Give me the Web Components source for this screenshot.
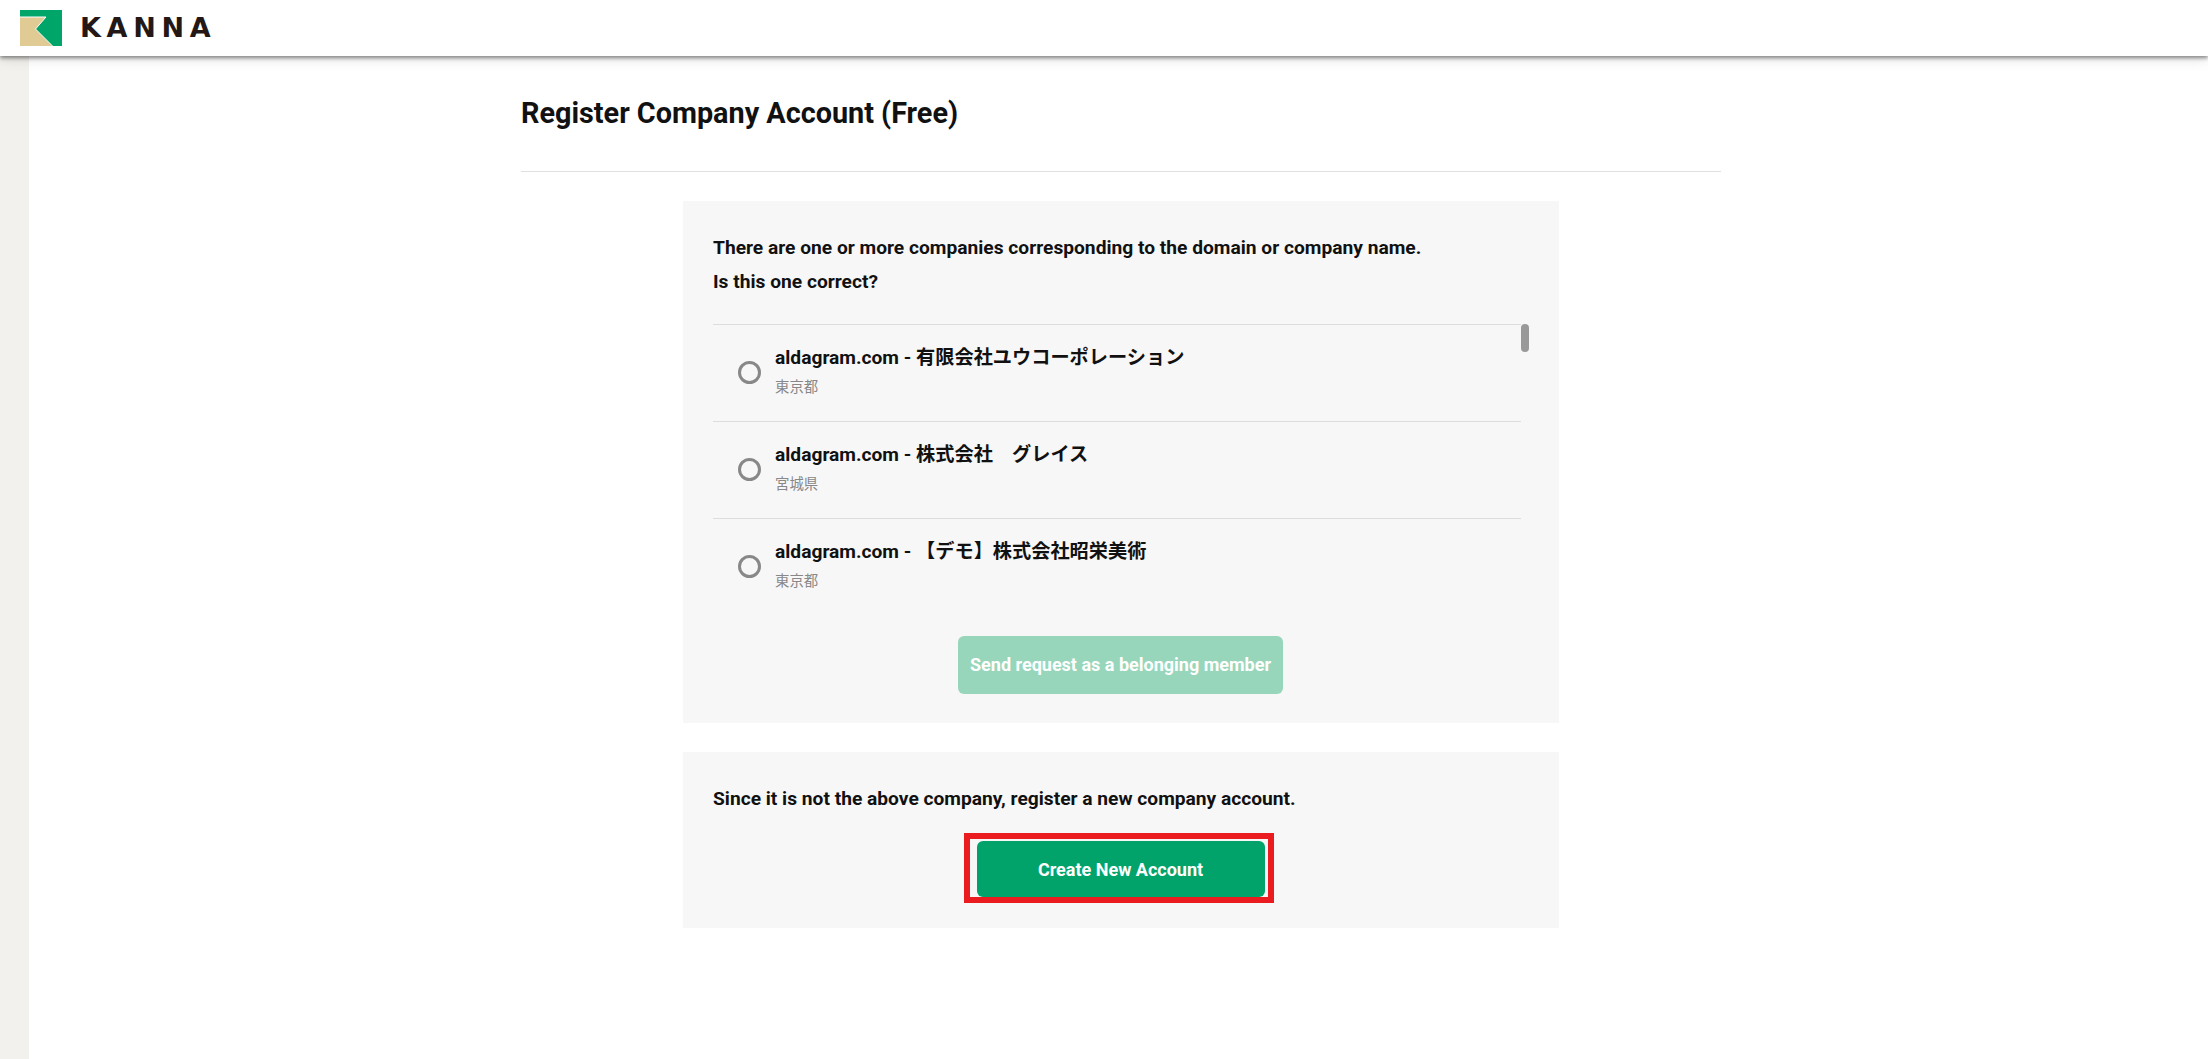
<!DOCTYPE html>
<html lang="en"><head><meta charset="utf-8"><title>Register Company Account</title>
<style>
html,body{margin:0;height:100%;overflow:hidden;background:#fff}
body{font-family:Roboto,"Noto Sans CJK JP",sans-serif;color:#111}
</style></head><body>
<app-shell>
  <kanna-header slot="header"></kanna-header>
  <page-title>Register Company Account (Free)</page-title>
  <info-card style="height:522px">
    <p>There are one or more companies corresponding to the domain or company name.</p>
    <p>Is this one correct?</p>
    <company-list>
      <company-row name="aldagram.com - 有限会社ユウコーポレーション" place="東京都"></company-row>
      <company-row name="aldagram.com - 株式会社　グレイス" place="宮城県"></company-row>
      <company-row name="aldagram.com - 【デモ】株式会社昭栄美術" place="東京都"></company-row>
    </company-list>
    <action-button disabled style="--w:325px;--mt:21px;--pb:2px">Send request as a belonging member</action-button>
  </info-card>
  <info-card style="margin-top:29px;height:176px">
    <p>Since it is not the above company, register a new company account.</p>
    <action-button highlighted style="--w:288px;--mt:25px;--pb:0px">Create New Account</action-button>
  </info-card>
</app-shell>
<script>
function def(name,html){customElements.define(name,class extends HTMLElement{
  connectedCallback(){if(this.shadowRoot)return;const r=this.attachShadow({mode:'open'});r.innerHTML=typeof html==='function'?html(this):html;}
});}
def('app-shell',`<style>
:host{display:grid;grid-template-rows:56px 1fr;height:1059px}
.head{position:relative;z-index:2}
.body{display:grid;grid-template-columns:29px 1fr;min-height:0}
.side{background:#f2f1ed}
main{width:1202px;margin-left:491px}
</style><div class="head"><slot name="header"></slot></div>
<div class="body"><div class="side"></div><main><slot></slot></main></div>`);
def('kanna-header',`<style>
:host{display:flex;align-items:center;height:56px;background:#fff;box-shadow:0 2px 4px rgba(0,0,0,.45),0 4px 12px rgba(0,0,0,.1);padding-left:20px;box-sizing:border-box}
svg{display:block;width:42px;height:36px;margin-top:-1px}
span{font:700 27px/1 "DejaVu Sans",sans-serif;letter-spacing:5.700px;color:#231815;margin-left:18px;margin-top:-2px}
</style><svg viewBox="0 0 42 36"><rect width="42" height="36" fill="#00a56a"/><path d="M0 7H26L15.500 19 32.500 36H0Z" fill="#dfcb93"/><path d="M0 7H26L15.500 19 32.500 36" fill="none" stroke="#fff" stroke-width="1"/></svg><span>KANNA</span>`);
def('page-title',`<style>
:host{display:block;height:115px;margin:0 1px 29px;border-bottom:1px solid #e0e0e0}
h1{margin:0;padding-top:38px;font:700 28.800px/38px Roboto,sans-serif;color:#111}
</style><h1><slot></slot></h1>`);
def('info-card',`<style>
:host{display:block;width:876px;margin:0 auto;background:#f7f7f7;padding:30px 29px 0 30px;box-sizing:border-box}
::slotted(p){margin:0;font:700 19.200px/34px Roboto,sans-serif;color:#111}
</style><slot></slot>`);
def('company-list',`<style>
:host{display:block;position:relative;margin-top:25px;width:808px}
.thumb{position:absolute;left:808px;top:0;width:8px;height:28px;border-radius:4px;background:#999}
</style><slot></slot><div class="thumb"></div>`);
def('company-row',h=>`<style>
:host{display:grid;grid-template-columns:23px 1fr;column-gap:14px;align-items:center;height:97px;box-sizing:border-box;border-top:1px solid #ddd;padding-left:25px}
.r{width:23px;height:23px;border:3px solid #888;border-radius:50%;box-sizing:border-box;margin-bottom:2px}
.t{margin-bottom:3px}
.n{font:700 19.200px/24px Roboto,"Noto Sans CJK JP",sans-serif;color:#111}
.p{font:14.400px/20px Roboto,"Noto Sans CJK JP",sans-serif;color:#888;margin-top:8px}
</style><div class="r"></div><div class="t"><div class="n">${h.getAttribute('name')}</div><div class="p">${h.getAttribute('place')}</div></div>`);
def('action-button',h=>`<style>
:host{display:block;position:relative;width:var(--w);height:${h.hasAttribute('highlighted')?56:58}px;margin:var(--mt) auto 0;left:-1px}
.b{display:flex;align-items:center;justify-content:center;box-sizing:border-box;height:100%;padding-bottom:var(--pb);border-radius:6px;background:${h.hasAttribute('disabled')?'#97d6bb':'#01a36a'};color:#fff;font:700 18px Roboto,sans-serif}
.mark{position:absolute;left:-13px;right:-9px;top:-8px;bottom:-6px;border:6px solid #eb1c1f;pointer-events:none}
</style><div class="b"><slot></slot></div>${h.hasAttribute('highlighted')?'<div class="mark"></div>':''}`);
</script>
</body></html>
